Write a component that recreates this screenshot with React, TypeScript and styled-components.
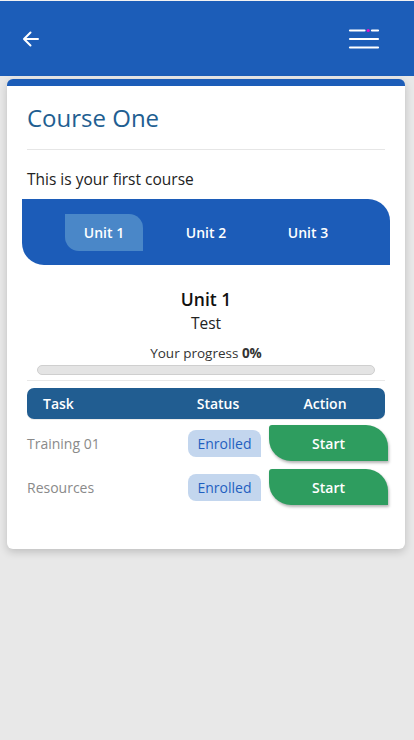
import React from "react";
import styled, { createGlobalStyle } from "styled-components";

const Global = createGlobalStyle`
  html, body { margin: 0; padding: 0; background: #e8e8e8; }
  body { font-family: "Open Sans", "Noto Sans", Arial, sans-serif; }
  * { box-sizing: border-box; }
`;

const Page = styled.div`
  min-height: 740px;
  background: #e8e8e8;
  border-top: 1px solid #f2f2f2;
  display: flex;
  flex-direction: column;
`;

const TopBar = styled.header`
  height: 75px;
  background: #1c5db8;
  display: flex;
  align-items: center;
  justify-content: space-between;
  padding: 0 34px 0 21px;
`;

const IconButton = styled.button`
  background: none;
  border: none;
  padding: 0;
  display: flex;
  align-items: center;
  cursor: pointer;
`;

const Card = styled.main`
  margin: 3px 9px 0 7px;
  background: #fff;
  border-top: 7px solid #1c5db8;
  border-radius: 6px;
  box-shadow: 0 3px 8px rgba(0, 0, 0, 0.18);
  padding: 14px 20px 44px 20px;
  display: flex;
  flex-direction: column;
`;

const Title = styled.h1`
  margin: 0;
  font-size: 24px;
  font-weight: 400;
  color: #215e91;
  line-height: 36px;
  padding-bottom: 13px;
  border-bottom: 1px solid #e6e6e6;
`;

const Description = styled.p`
  margin: 18px 0 9px;
  font-size: 15.5px;
  color: #222;
  line-height: 22px;
`;

const TabBar = styled.nav`
  margin: 0 -5px;
  height: 66px;
  background: #1c5cb8;
  border-radius: 0 22px 0 22px;
  padding: 15px 0 0 43px;
  display: flex;
  align-items: flex-start;
`;

const Tab = styled.button<{ $active?: boolean }>`
  width: 78px;
  height: 37px;
  margin-right: 24px;
  border: none;
  border-radius: 0 14px 0 14px;
  background: ${(p) => (p.$active ? "#4a87c8" : "transparent")};
  color: #fff;
  font-family: inherit;
  font-size: 14px;
  font-weight: 600;
  cursor: pointer;
`;

const UnitHeader = styled.section`
  display: flex;
  flex-direction: column;
  align-items: center;
  padding-top: 22px;
`;

const UnitName = styled.h2`
  margin: 0;
  font-size: 17.5px;
  font-weight: 600;
  color: #111;
  line-height: 24px;
`;

const UnitSub = styled.div`
  font-size: 15.5px;
  color: #222;
  line-height: 24px;
`;

const ProgressLabel = styled.div`
  margin-top: 9px;
  font-size: 13.5px;
  color: #333;
  line-height: 18px;
  b { font-weight: 700; }
`;

const ProgressTrack = styled.div`
  align-self: stretch;
  margin: 3px 10px 0;
  height: 10px;
  border-radius: 5px;
  background: #e4e4e4;
  border: 1px solid #cfcfcf;
`;

const Divider = styled.hr`
  border: none;
  border-top: 1px solid #e8e8e8;
  margin: 5px 0 7px;
  width: 100%;
`;

const TableHead = styled.div`
  display: grid;
  grid-template-columns: 1fr 90px 90px;
  column-gap: 17px;
  align-items: center;
  height: 31px;
  background: #215d91;
  border-radius: 7px;
  color: #fff;
  font-size: 14px;
  font-weight: 600;
  padding: 0 15px 0 16px;
  margin-bottom: 1px;
  box-shadow: 0 1px 0 #ececec;
`;

const HeadCell = styled.span<{ $center?: boolean }>`
  text-align: ${(p) => (p.$center ? "center" : "left")};
`;

const Rows = styled.div`
  display: flex;
  flex-direction: column;
  gap: 8px;
  padding-top: 5px;
`;

const Row = styled.div`
  display: grid;
  grid-template-columns: 1fr 73px 119px;
  column-gap: 8px;
  align-items: center;
  margin-right: -3px;
`;

const TaskName = styled.span`
  font-size: 14px;
  color: #8a8a8a;
`;

const Badge = styled.span`
  height: 27px;
  display: flex;
  align-items: center;
  justify-content: center;
  background: #c3d6ee;
  color: #1f5fc0;
  font-size: 14px;
  border-radius: 8px 8px 0 8px;
`;

const StartButton = styled.button`
  height: 36px;
  border: none;
  background: #2e9d5f;
  color: #fff;
  font-family: inherit;
  font-size: 14px;
  font-weight: 600;
  border-radius: 3px 22px 0 22px;
  box-shadow: 1px 2px 3px rgba(0, 0, 0, 0.3);
  cursor: pointer;
`;

const BackIcon = () => (
  <svg width="20" height="20" viewBox="0 0 20 20" fill="none" stroke="#fff" strokeWidth="2" strokeLinecap="round" strokeLinejoin="round">
    <path d="M17 10H3.5M9.5 3.5L3 10l6.5 6.5" />
  </svg>
);

const MenuIcon = () => (
  <svg width="32" height="22" viewBox="0 0 32 22" fill="none" strokeLinecap="round" strokeWidth="2.2">
    <path d="M2 2.5H16.5" stroke="#fff" />
    <path d="M24 2.5H30" stroke="#fff" />
    <circle cx="20.2" cy="2.5" r="1.6" fill="#e010c8" />
    <path d="M2 11H30" stroke="#fff" />
    <path d="M2 19.5H30" stroke="#fff" />
  </svg>
);

const tasks = ["Training 01", "Resources"];

export default function App() {
  return (
    <>
      <Global />
      <Page>
        <TopBar>
          <IconButton aria-label="Back"><BackIcon /></IconButton>
          <IconButton aria-label="Menu"><MenuIcon /></IconButton>
        </TopBar>
        <Card>
          <Title>Course One</Title>
          <Description>This is your first course</Description>
          <TabBar>
            <Tab $active>Unit 1</Tab>
            <Tab>Unit 2</Tab>
            <Tab>Unit 3</Tab>
          </TabBar>
          <UnitHeader>
            <UnitName>Unit 1</UnitName>
            <UnitSub>Test</UnitSub>
            <ProgressLabel>Your progress <b>0%</b></ProgressLabel>
            <ProgressTrack />
            <Divider />
          </UnitHeader>
          <TableHead>
            <HeadCell>Task</HeadCell>
            <HeadCell $center>Status</HeadCell>
            <HeadCell $center>Action</HeadCell>
          </TableHead>
          <Rows>
            {tasks.map((t) => (
              <Row key={t}>
                <TaskName>{t}</TaskName>
                <Badge>Enrolled</Badge>
                <StartButton>Start</StartButton>
              </Row>
            ))}
          </Rows>
        </Card>
      </Page>
    </>
  );
}
